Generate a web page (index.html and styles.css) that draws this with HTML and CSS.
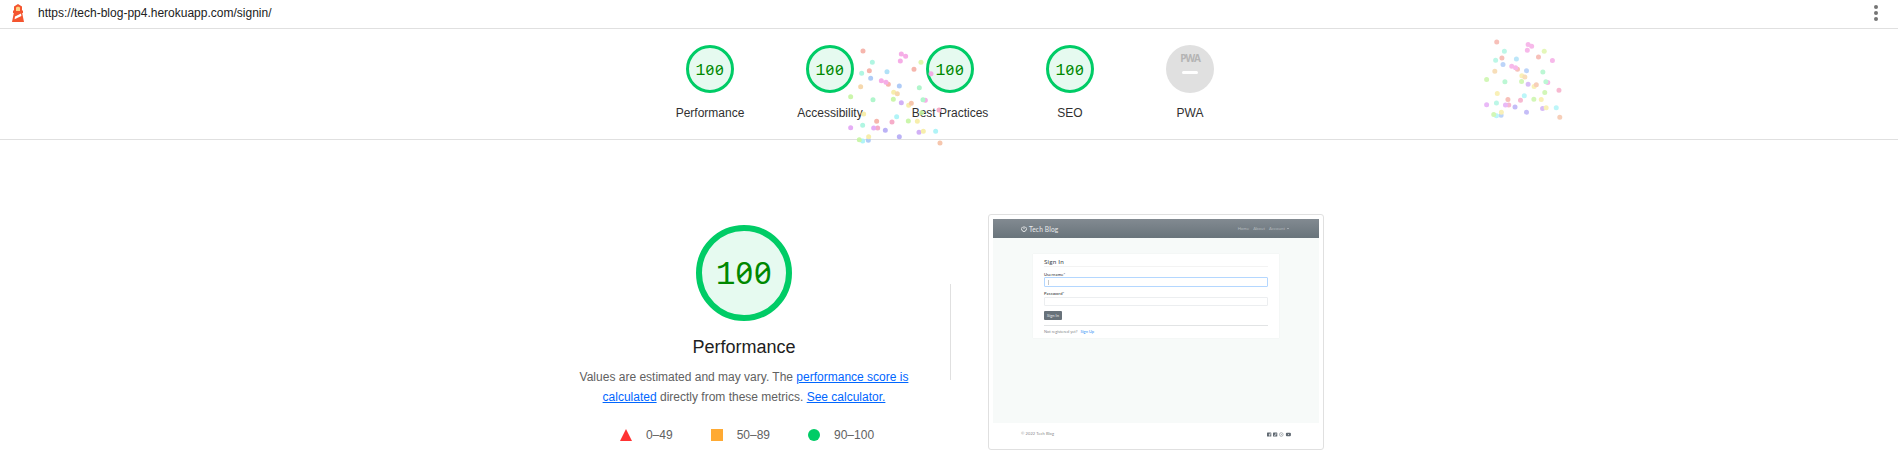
FILE: index.html
```html
<!DOCTYPE html>
<html lang="en">
<head>
<meta charset="utf-8">
<title>Lighthouse Report</title>
<link rel="stylesheet" href="styles.css">
</head>
<body>
<header class="topbar">
  <svg class="topbar-logo" width="12" height="18" viewBox="0 0 12 18">
    <path d="M6 0 10 2.6V6.5H11V9H10.2L12 18H0L1.8 9H1V6.5H2V2.6Z" fill="#f4552f"/>
    <path d="M4 3.5 6 2.5 8 3.5V7H4Z" fill="#ffd385"/>
    <path d="M3 12.4 9 9.6 9.4 12 2.6 15.2Z" fill="#fff"/>
  </svg>
  <span class="topbar-url">https://tech-blog-pp4.herokuapp.com/signin/</span>
  <svg class="topbar-menu" width="4" height="16" viewBox="0 0 4 16" fill="#757575"><circle cx="2" cy="2" r="2"/><circle cx="2" cy="8" r="2"/><circle cx="2" cy="14" r="2"/></svg>
</header>

<section class="scores">
  <div class="gauge"><div class="ring"><span class="one">1</span><span class="zeros">00</span></div><div class="label">Performance</div></div>
  <div class="gauge"><div class="ring"><span class="one">1</span><span class="zeros">00</span></div><div class="label">Accessibility</div></div>
  <div class="gauge"><div class="ring"><span class="one">1</span><span class="zeros">00</span></div><div class="label">Best Practices</div></div>
  <div class="gauge"><div class="ring"><span class="one">1</span><span class="zeros">00</span></div><div class="label">SEO</div></div>
  <div class="gauge"><div class="pwa"><span class="pwa-text">PWA</span><span class="pwa-dash"></span></div><div class="label">PWA</div></div>
</section>

<main class="category">
  <div class="summary">
    <div class="ring ring-large"><span class="one">1</span><span class="zeros">00</span></div>
    <h1 class="title">Performance</h1>
    <p class="desc">Values are estimated and may vary. The <a class="link">performance score is<br>calculated</a> directly from these metrics. <a class="link">See calculator.</a></p>
    <div class="scale">
      <span class="range"><svg width="12" height="12"><path d="M6 0 12 12H0Z" fill="#f33"/></svg>0–49</span>
      <span class="range"><svg width="12" height="12"><path d="M0 0H12V12H0Z" fill="#fa3"/></svg>50–89</span>
      <span class="range"><svg width="12" height="12"><circle cx="6" cy="6" r="6" fill="#0c6"/></svg>90–100</span>
    </div>
  </div>
  <div class="divider"></div>
  <div class="shot">
    <div class="nav">
      <svg class="power" width="6" height="6" viewBox="0 0 12 12" fill="none" stroke="#fff" stroke-width="1.6"><path d="M3.5 1.6a5 5 0 1 0 5 0M6 .5V6"/></svg>
      <span class="brand">Tech Blog</span>
      <span class="nav-link">Home</span><span class="nav-link">About</span><span class="nav-link nav-last">Account</span><span class="caret"></span>
    </div>
    <div class="page">
      <div class="card">
        <div class="card-title">Sign In</div>
        <div class="field-label">Username*</div>
        <div class="input input-focus"><span class="cursor"></span></div>
        <div class="field-label label-second">Password*</div>
        <div class="input"></div>
        <div class="button">Sign In</div>
        <div class="register">Not registered yet? <span class="signup">Sign Up</span></div>
      </div>
    </div>
    <div class="footer">
      <span class="copy">© 2022 Tech Blog</span>
      <svg width="24" height="5" viewBox="0 0 24 5">
        <rect x="0" y=".4" width="4.3" height="4.2" rx=".6" fill="#5f6871"/><path d="M2.7 4.6V2q0-.7.9-.7M1.8 2.7h1.7" stroke="#fff" stroke-width=".6" fill="none"/>
        <rect x="6" y=".4" width="4.3" height="4.2" rx=".6" fill="#5f6871"/><path d="M7 3.4q2 .5 2.2-1.7L8.2 2" stroke="#fff" stroke-width=".6" fill="none"/>
        <circle cx="14.3" cy="2.5" r="1.8" stroke="#8d949a" stroke-width=".7" fill="none"/><circle cx="14.3" cy="2.5" r=".5" fill="#8d949a"/>
        <rect x="18.9" y=".8" width="5" height="3.5" rx="1" fill="#5f6871"/><path d="M21 1.9 22.2 2.6 21 3.2Z" fill="#fff"/>
      </svg>
    </div>
  </div>
</main>

<svg class="confetti" width="1898" height="462" viewBox="0 0 1898 462">
  <defs>
    <g id="burst" class="burst">
      <path class="red" d="M99 48h.01M118 107h.01M252 103h.01M175 148h.01M140 259h.01"/>
      <path class="pink" d="M214 57h.01M227 64h.01M211 78h.01M154 137h.01M168 142h.01M303 116h.01M286 196h.01"/>
      <path class="rose" d="M327 225h.01M186 261h.01M143 279h.01"/>
      <path class="violet" d="M62 278h.01M131 279h.01"/>
      <path class="purple" d="M214 203h.01M267 292h.01"/>
      <path class="indigo" d="M166 286h.01M208 305h.01"/>
      <path class="blue" d="M122 130h.01M208 153h.01M115 316h.01"/>
      <path class="sky" d="M171 110h.01"/>
      <path class="cyan" d="M200 245h.01M317 289h.01M98 318h.01"/>
      <path class="teal" d="M127 82h.01M95 115h.01M98 271h.01"/>
      <path class="mint" d="M268 158h.01M129 194h.01M279 194h.01"/>
      <path class="green" d="M62 185h.01M190 193h.01M275 233h.01M235 258h.01M88 314h.01"/>
      <path class="lime" d="M273 82h.01"/>
      <path class="yellow" d="M191 172h.01M101 237h.01M236 211h.01M262 259h.01M280 289h.01M116 305h.01"/>
      <path class="gold" d="M202 176h.01M92 155h.01"/>
      <path class="orange" d="M244 205h.01M330 324h.01"/>
    </g>
  </defs>
  <use href="#burst" transform="translate(830 35) scale(.3333)" opacity=".88"/>
  <use href="#burst" transform="translate(1469.7 28.9) scale(.273)" opacity=".75"/>
</svg>
</body>
</html>
```
FILE: styles.css
```css
* { box-sizing: border-box; }
body { margin: 0; height: 462px; overflow: hidden; background: #fff; color: #212121; font: 12px/20px "Liberation Sans", Arial, sans-serif; }
.topbar { height: 29px; border-bottom: 1px solid #e0e0e0; display: flex; align-items: flex-start; padding: 4px 20px 0 12px; }
.topbar-url { margin: -1px auto 0 14px; }
.topbar-menu { margin-top: 1px; }
.scores { display: flex; height: 111px; border-bottom: 1px solid #e0e0e0; padding: 16px 0 0 650px; }
.gauge { width: 120px; display: flex; flex-direction: column; align-items: center; }
.ring { width: 48px; height: 48px; border: 3px solid #0c6; border-radius: 50%; background: #e6faf0; color: #080; display: flex; justify-content: center; align-items: baseline; line-height: 42px; }
.one { font-family: "Liberation Mono", monospace; font-size: 16.5px; }
.zeros { font-family: "Noto Sans", sans-serif; font-size: 15.3px; font-feature-settings: "zero"; letter-spacing: .8px; }
.label { margin-top: 10px; color: #303030; }
.pwa { width: 48px; height: 48px; border-radius: 50%; background: #e0e0e0; display: flex; flex-direction: column; align-items: center; padding-top: 9px; }
.pwa-text { font: bold 10px/9px "Open Sans", sans-serif; letter-spacing: -1.1px; color: #b4b4b4; }
.pwa-dash { width: 16px; height: 3px; border-radius: 1.5px; background: #fff; margin-top: 8px; }
.category { display: flex; padding-left: 569px; }
.summary { width: 350px; padding-top: 85px; display: flex; flex-direction: column; align-items: center; }
.ring-large { width: 96px; height: 96px; border-width: 6px; line-height: 82px; }
.ring-large .one { font-size: 33px; }
.ring-large .zeros { font-size: 30.8px; letter-spacing: .8px; }
.title { margin: 14px 0 0; font-size: 18px; font-weight: 400; line-height: 24px; }
.desc { margin: 8px 0 0; color: #616161; text-align: center; white-space: nowrap; }
.link { color: #06f; text-decoration: underline; }
.scale { display: flex; justify-content: center; gap: 38px; margin-top: 18px; padding-left: 6px; color: #616161; }
.range { display: flex; align-items: center; gap: 14px; }
.divider { width: 1px; height: 96px; margin: 144px 37px 0 31px; background: #e0e0e0; }
.shot { width: 336px; height: 236px; margin-top: 74px; border: 1px solid #e0e0e0; border-radius: 3px; padding: 4px; font: 4px/6px Lato, sans-serif; color: #555c63; }
.nav { height: 19px; background: linear-gradient(#828a91, #69747b); display: flex; align-items: center; padding: 0 30px 0 28px; color: #fff; }
.brand { font-size: 6.6px; margin: 0 auto 0 2px; letter-spacing: .15px; color: #e8eaeb; }
.nav-link { color: #b4babd; margin-right: 4px; font-size: 4.2px; letter-spacing: .1px; }
.nav-last { margin-right: 2px; }
.caret { border: 1px solid transparent; border-top-color: #d0d4d7; border-bottom: 0; }
.page { height: 185px; background: #f7faf9; padding: 15.5px 40px 0; }
.card { height: 84px; background: #fff; box-shadow: 0 0 1px #e3e6e6; padding: 4px 11px 0; display: flex; flex-direction: column; }
.card-title { font-size: 6.3px; line-height: 8px; height: 9px; letter-spacing: .2px; color: #40464b; border-bottom: 1px solid #f3f3f3; }
.field-label { height: 5px; line-height: 5px; margin-top: 5px; font-size: 4.1px; letter-spacing: .18px; color: #212529; }
.label-second { margin-top: 4px; }
.input { height: 9px; border: 1px solid #eceef0; border-radius: 1px; margin-top: 1px; padding: 2px 3px; }
.input-focus { height: 10px; margin-top: 0; border-color: #b4d7ff; }
.cursor { display: block; width: 1px; height: 5px; background: #c8c8c8; }
.button { width: 18px; height: 9px; margin-top: 5px; background: #68727a; color: #e7e9ea; border-radius: 1px; text-align: center; line-height: 9px; }
.register { border-top: 1px solid #e2e4e5; margin-top: 5px; padding-top: 3.5px; font-size: 4px; color: #82878b; }
.signup { color: #3590f5; margin-left: 2px; }
.footer { height: 22px; padding: 0 28px; display: flex; justify-content: space-between; align-items: center; }
.copy { color: #888; letter-spacing: .1px; }
.confetti { position: absolute; left: 0; top: 0; pointer-events: none; }
.burst path { stroke-width: 5px; stroke-linecap: round; vector-effect: non-scaling-stroke; }
.red { stroke: #f5aca2; }
.pink { stroke: #f5a2e4; }
.rose { stroke: #f5a2c2; }
.violet { stroke: #e2a2f5; }
.purple { stroke: #cba6f5; }
.indigo { stroke: #b2a8f5; }
.blue { stroke: #a6c6f7; }
.sky { stroke: #a6def7; }
.cyan { stroke: #a6f3f7; }
.teal { stroke: #a6f5df; }
.mint { stroke: #a6f5c6; }
.green { stroke: #c4f5a0; }
.lime { stroke: #dcf5a2; }
.yellow { stroke: #f7eca0; }
.gold { stroke: #f5d3a2; }
.orange { stroke: #f5bfa2; }
```
